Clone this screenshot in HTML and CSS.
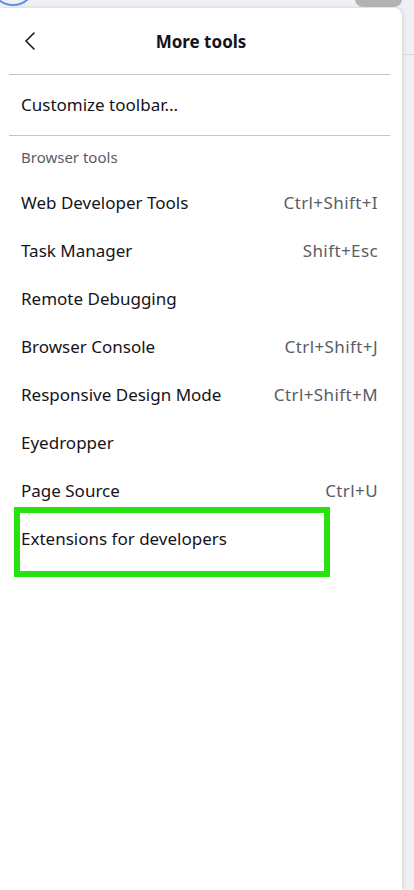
FILE: index.html
```html
<!DOCTYPE html>
<html lang="en">

<head>
    <meta charset="UTF-8">
    <meta name="viewport" content="width=device-width, initial-scale=1.0">
    <title>More tools</title>
    <link rel="stylesheet" href="styles.css">
</head>

<body>
<div class="toolbar-strip">
    <span class="focus-ring"></span>
    <span class="tab-stub"></span>
</div>
<div class="side-line"></div>

<div class="panel">
    <div class="panel-header">
        <span class="back-button" onclick="goBack()">
            <svg width="12" height="18" viewBox="0 0 12 18">
                <path d="M10 1 L2 9 L10 17" fill="none" stroke="#15141a" stroke-width="1.6" stroke-linecap="round" stroke-linejoin="round"/>
            </svg>
        </span>
        <span class="page-title">More tools</span>
        <span></span>
    </div>
    <div class="separator"></div>

    <div class="menu-item customize">Customize toolbar...</div>
    <div class="separator"></div>

    <div class="section-label">Browser tools</div>
    <div class="menu-item"><span>Web Developer Tools</span><span class="shortcut">Ctrl+Shift+I</span></div>
    <div class="menu-item"><span>Task Manager</span><span class="shortcut">Shift+Esc</span></div>
    <div class="menu-item"><span>Remote Debugging</span></div>
    <div class="menu-item"><span>Browser Console</span><span class="shortcut">Ctrl+Shift+J</span></div>
    <div class="menu-item"><span>Responsive Design Mode</span><span class="shortcut">Ctrl+Shift+M</span></div>
    <div class="menu-item"><span>Eyedropper</span></div>
    <div class="menu-item"><span>Page Source</span><span class="shortcut">Ctrl+U</span></div>
    <div class="menu-item highlighted"><span>Extensions for developers</span></div>
</div>

<script>
    function goBack() {
        window.history.back();
    }
</script>
</body>

</html>
```

FILE: styles.css
```css
body {
    margin: 0;
    height: 890px;
    overflow: hidden;
    background-color: #f0f0f4;
    font-family: "Noto Sans", "Open Sans", sans-serif;
    color: #15141a;
    position: relative;
}

.toolbar-strip {
    height: 8px;
    position: relative;
    overflow: hidden;
}

.focus-ring {
    position: absolute;
    left: -10px;
    top: -40px;
    width: 42px;
    height: 42px;
    border: 2px solid #5b8fe8;
    border-radius: 50%;
}

.tab-stub {
    position: absolute;
    left: 355px;
    top: -10px;
    width: 47px;
    height: 17px;
    border-radius: 8px;
    background-color: #b2b2b5;
}

.side-line {
    position: absolute;
    left: 402px;
    top: 54px;
    width: 12px;
    height: 1px;
    background-color: #d8d8dc;
}

.panel {
    width: 402px;
    height: 882px;
    background-color: #ffffff;
    border-top-right-radius: 8px;
    box-shadow: 1px 0 4px rgba(0, 0, 0, 0.12);
}

.panel-header {
    height: 66px;
    display: grid;
    grid-template-columns: 60px 1fr 60px;
    align-items: center;
}

.back-button {
    display: flex;
    padding-left: 24px;
    cursor: pointer;
}

.page-title {
    text-align: center;
    font-weight: bold;
    font-size: 17px;
}

.separator {
    height: 1px;
    margin: 0 12px 0 9px;
    background-color: #c4c4c8;
}

.menu-item {
    height: 48px;
    margin: 0 12px 0 9px;
    padding: 0 12px;
    display: flex;
    justify-content: space-between;
    align-items: center;
    font-size: 17px;
}

.menu-item.customize {
    height: 59px;
    padding-bottom: 1px;
}

.shortcut {
    color: #5b5b66;
    letter-spacing: 0.4px;
}

.section-label {
    height: 42px;
    margin: 0 12px 0 9px;
    padding: 0 12px;
    display: flex;
    align-items: center;
    font-size: 15px;
    color: #5b5b66;
}

.highlighted {
    position: relative;
}

.highlighted::after {
    content: "";
    position: absolute;
    left: 5px;
    top: -7px;
    width: 304px;
    height: 58px;
    border: 6px solid #27e20c;
}
```
